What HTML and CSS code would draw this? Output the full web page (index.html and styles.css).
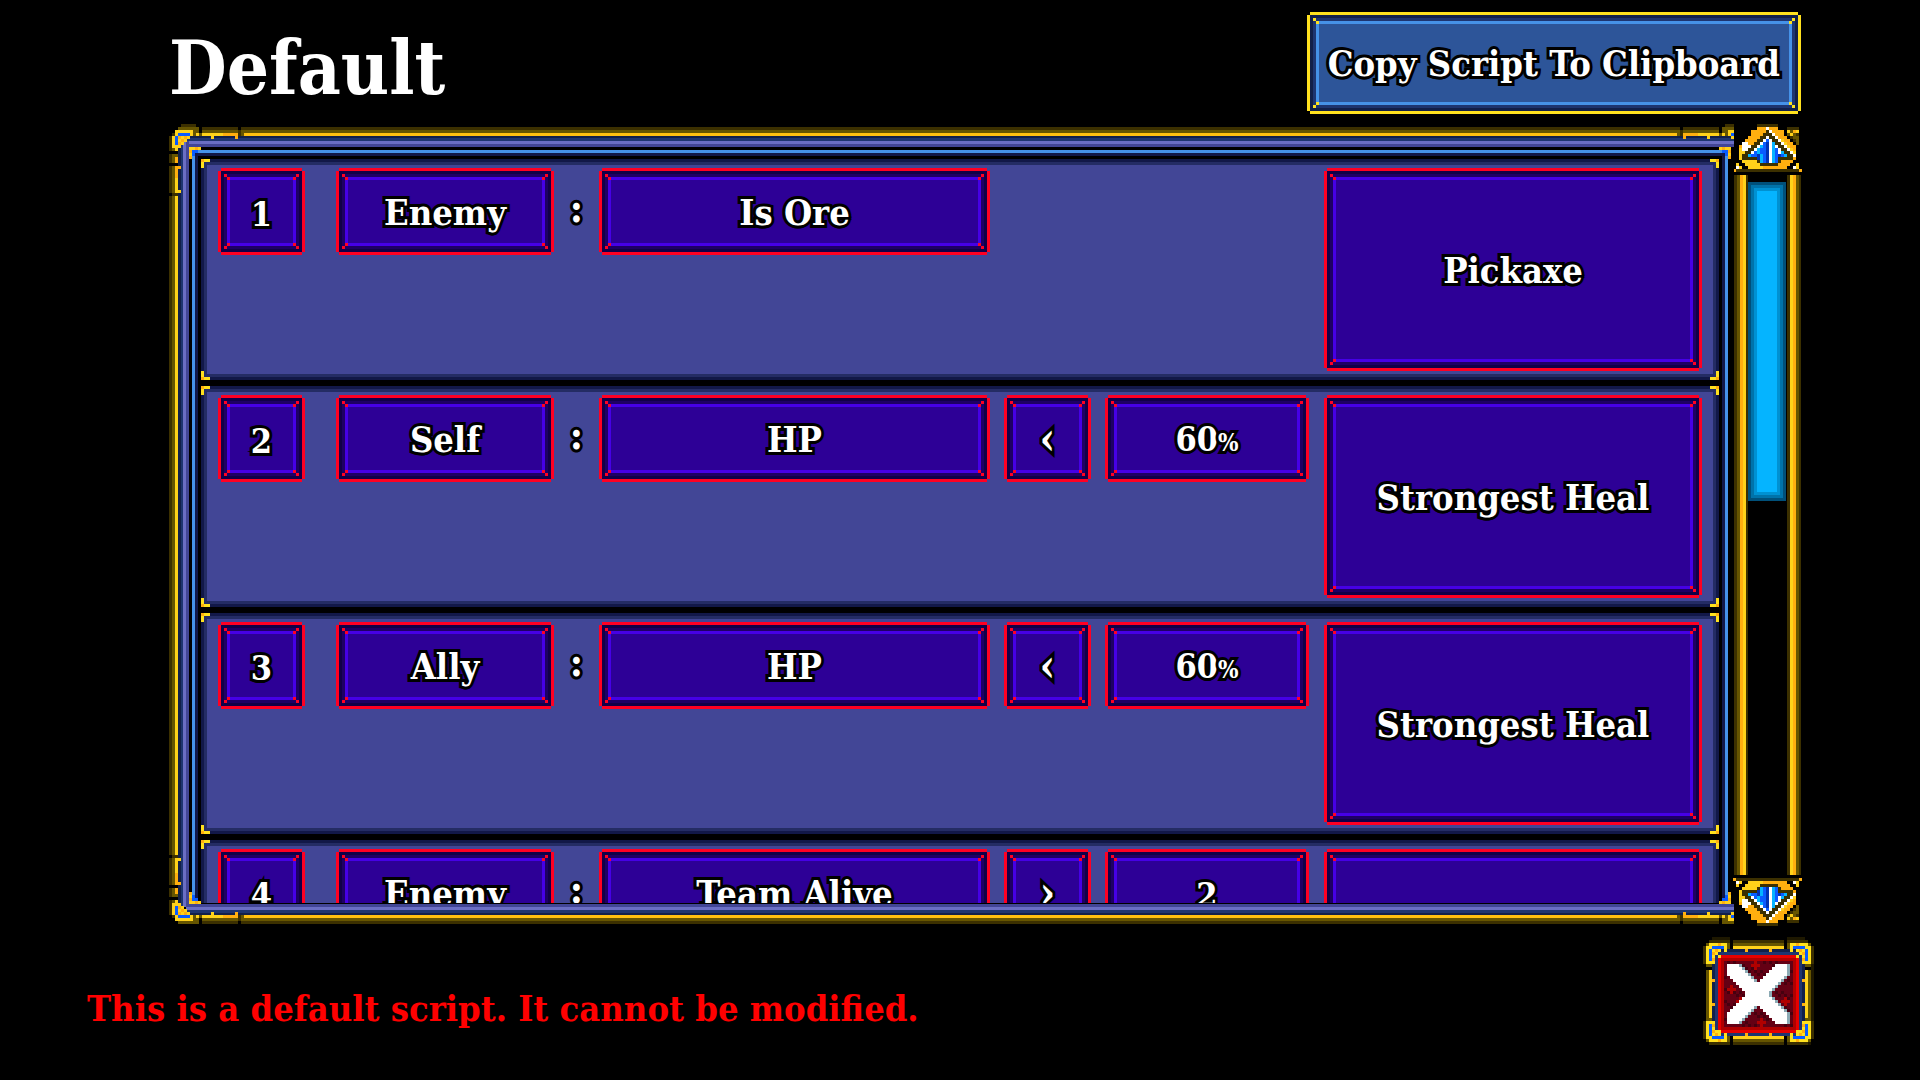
FILE: index.html
```html
<!DOCTYPE html>
<html lang="en">
<head>
<meta charset="utf-8">
<title>Default</title>
<link rel="stylesheet" href="styles.css">
</head>
<body>
<svg class="defs" aria-hidden="true">
  <symbol id="close-corner" viewBox="0 0 9 9">
    <path fill="#3c3000" d="M2 0h6v1h-6zM0 2h1v6h-1z"/>
    <path fill="#665500" d="M1 1h8v2h-8zM1 1h2v8h-2zM3 3h2v1h-2z"/>
    <path fill="#ffe11e" d="M2 1h6v1h-6zM1 2h7v1h-7zM7 2h1v2h-1zM1 2h1v6h-1zM1 7h3v1h-3zM3 3h3v1h-3zM3 3h1v4h-1zM4 4h1v1h-1z"/>
    <path fill="#ffaf0f" d="M4 3h1v1h-1zM3 4h1v1h-1zM5 1h1v1h-1zM3 6h1v1h-1z"/>
    <path fill="#0a5cff" d="M3 2h4v1h-4zM2 3h1v4h-1z"/>
  </symbol>
</svg>

<header class="top">
  <h1 class="title">Default</h1>
  <button class="box box-copy" type="button">Copy Script To Clipboard</button>
</header>

<main class="viewer">
  <section class="panel">
    <svg class="orn orn-tl" data-sprite="panelCorner"></svg>
    <svg class="orn orn-tr" data-sprite="panelCorner"></svg>
    <svg class="orn orn-bl" data-sprite="panelCorner"></svg>
    <svg class="orn orn-br" data-sprite="panelCorner"></svg>
    <div class="inner">
      <ol class="rules">
        <li class="rule">
          <button class="box num" type="button">1</button>
          <button class="box who" type="button">Enemy</button>
          <span class="colon">:</span>
          <button class="box cond" type="button">Is Ore</button>
          <button class="box act" type="button">Pickaxe</button>
        </li>
        <li class="rule">
          <button class="box num" type="button">2</button>
          <button class="box who" type="button">Self</button>
          <span class="colon">:</span>
          <button class="box cond" type="button">HP</button>
          <button class="box cmp" type="button">‹</button>
          <button class="box val" type="button">60<small class="pct">%</small></button>
          <button class="box act" type="button">Strongest Heal</button>
        </li>
        <li class="rule">
          <button class="box num" type="button">3</button>
          <button class="box who" type="button">Ally</button>
          <span class="colon">:</span>
          <button class="box cond" type="button">HP</button>
          <button class="box cmp" type="button">‹</button>
          <button class="box val" type="button">60<small class="pct">%</small></button>
          <button class="box act" type="button">Strongest Heal</button>
        </li>
        <li class="rule">
          <button class="box num" type="button">4</button>
          <button class="box who" type="button">Enemy</button>
          <span class="colon">:</span>
          <button class="box cond" type="button">Team Alive</button>
          <button class="box cmp" type="button">›</button>
          <button class="box val" type="button">2</button>
          <button class="box act" type="button"></button>
        </li>
      </ol>
    </div>
    <svg class="nook nook-tl" data-sprite="innerCorner"></svg>
    <svg class="nook nook-tr" data-sprite="innerCorner"></svg>
    <svg class="nook nook-bl" data-sprite="innerCorner"></svg>
    <svg class="nook nook-br" data-sprite="innerCorner"></svg>
  </section>
  <div class="scroll">
    <button class="cap" type="button"><svg data-sprite="arrow"></svg></button>
    <div class="track"><div class="thumb"></div></div>
    <button class="cap cap-down" type="button"><svg data-sprite="arrow"></svg></button>
  </div>
</main>

<footer class="bottom">
  <p class="note">This is a default script. It cannot be modified.</p>
  <button class="close" type="button">
    <svg viewBox="0 0 38 37" width="114" height="111" shape-rendering="crispEdges">
      <path fill="#1e1800" d="M3 0h6v1h19v-1h6v3h2v6h1v19h-1v8h-33v-1h-2v-33h2z"/>
      <path fill="#3c3000" d="M2 1h33v35h-33z"/>
      <path fill="#665500" d="M1 2h35v33h-35z"/>
      <path fill="#ffd21a" d="M9 3h19v1h-19zM9 33h19v1h-19zM2 9h1v19h-1zM34 9h1v19h-1z"/>
      <path fill="#000" d="M9 1h1v3h-1zM27 1h1v3h-1zM9 33h1v3h-1zM27 33h1v3h-1zM1 10h2v1h-2zM1 27h2v1h-2zM34 10h2v1h-2zM34 27h2v1h-2z"/>
      <path fill="#12204a" d="M3 4h31v29h-31z"/>
      <path fill="#1e3570" d="M4 5h29v28h-29z"/>
      <path fill="#ffaf0f" d="M14 4h1v1h-1zM22 4h1v1h-1zM14 32h1v1h-1zM22 32h1v1h-1zM3 14h1v1h-1zM3 22h1v1h-1zM33 14h1v1h-1zM33 22h1v1h-1z"/>
      <path fill="#e60000" d="M5 6h27v26h-27z"/>
      <path fill="#b00000" d="M6 7h25v24h-25z"/>
      <path fill="#640014" d="M7 8h23v22h-23z"/>
      <g id="close-art"></g>
      <use href="#close-corner" x="0" y="1" width="9" height="9"/>
      <use href="#close-corner" x="0" y="1" width="9" height="9" transform="translate(37 0) scale(-1 1)"/>
      <use href="#close-corner" x="0" y="1" width="9" height="9" transform="translate(0 37) scale(1 -1)"/>
      <use href="#close-corner" x="0" y="1" width="9" height="9" transform="translate(37 37) scale(-1 -1)"/>
      <path fill="#ffe11e" d="M5 6h1v1h-1zM31 6h1v1h-1zM5 31h1v1h-1zM31 31h1v1h-1z"/>
    </svg>
  </button>
</footer>
<script src="sprites.js"></script>
</body>
</html>
```
FILE: styles.css
```css
* { box-sizing: border-box; }

body {
  margin: 0;
  height: 100vh;
  display: flex;
  flex-direction: column;
  overflow: hidden;
  background: #000;
  color: #fff;
  font-family: "DejaVu Serif Condensed", "DejaVu Serif", serif;
  font-stretch: condensed;
  font-weight: bold;
  font-size: 36px;
  line-height: 40px;
}

svg { display: block; shape-rendering: crispEdges; }
.defs { position: absolute; width: 0; height: 0; }

button {
  margin: 0;
  padding: 0;
  border: 0;
  background: none;
  color: inherit;
  font: inherit;
}

/* header */
.top {
  display: flex;
  justify-content: space-between;
  align-items: center;
  padding: 12px 119px 10px 169px;
}
.title {
  margin: 0;
  padding-top: 10px;
  font-size: 74px;
  line-height: 88px;
}

/* pixel-bevelled box: the four offset shadows leave the corners notched */
.box {
  --edge: #ff0023;
  --ring1: #120048;
  --ring2: #1e0064;
  --line: #4600e6;
  --fill: #2d0096;
  position: relative;
  margin: 3px;
  background: var(--fill);
  box-shadow:
    inset 0 0 0 3px var(--ring1),
    inset 0 0 0 6px var(--ring2),
    inset 0 0 0 9px var(--line),
    0 -3px var(--edge), 0 3px var(--edge),
    -3px 0 var(--edge), 3px 0 var(--edge);
  -webkit-text-stroke: 6px #000;
  paint-order: stroke fill;
  text-shadow: 0 3px #000;
  white-space: nowrap;
}
.box::before {
  --dot: linear-gradient(var(--edge), var(--edge));
  content: "";
  position: absolute;
  inset: 3px;
  background:
    var(--dot) left 0 top 0, var(--dot) left 3px top 3px,
    var(--dot) right 0 top 0, var(--dot) right 3px top 3px,
    var(--dot) left 0 bottom 0, var(--dot) left 3px bottom 3px,
    var(--dot) right 0 bottom 0, var(--dot) right 3px bottom 3px;
  background-size: 3px 3px;
  background-repeat: no-repeat;
}
.box-copy {
  --edge: #ffe11e;
  --ring1: #12204a;
  --ring2: #1e3570;
  --line: #4692e8;
  --fill: #2d5599;
  height: 96px;
  padding: 0 18px;
}

/* framed list */
.viewer {
  flex: 1;
  min-height: 0;
  display: flex;
  padding: 0 118px 0 169px;
}
.panel {
  position: relative;
  flex: 1;
  min-width: 0;
  overflow: hidden;
  padding: 23px 5px 21px 20px;
  background:
    linear-gradient(#000, #000) 20px 23px / 100% calc(100% - 44px) no-repeat,
    linear-gradient(90deg, #3c3000 3px, #665500 3px 6px, #ffd21a 6px 9px, #12204a 9px 12px, #1e3570 12px 14px, #6a6ec4 14px 17px, #424696 17px 20px, transparent 20px) 0 17px / 20px calc(100% - 34px) no-repeat,
    linear-gradient(#000 3px, #3c3000 3px 6px, #665500 6px 9px, #ffc010 9px 12px, #12204a 12px 14px, #1e3570 14px 17px, #6a6ec4 17px 20px, #424696 20px 23px) 17px 0 / 100% 23px no-repeat,
    linear-gradient(0deg, #3c3000 3px, #665500 3px 6px, #ffc010 6px 9px, #12204a 9px 11px, #1e3570 11px 14px, #6a6ec4 14px 17px, #424696 17px 20px, #000 20px) 17px 100% / 100% 21px no-repeat;
}
.inner {
  height: 100%;
  margin: 0 1px 0 3px;
  padding: 12px 9px 0;
  overflow: hidden;
  background:
    linear-gradient(#4692e8 3px, #121848 3px 6px, #000 6px) 3px 3px / calc(100% - 6px) 6px no-repeat,
    linear-gradient(90deg, #4692e8 3px, #121848 3px) 0 3px / 6px 100% no-repeat,
    linear-gradient(270deg, #4692e8 3px, #121848 3px) 100% 3px / 6px 100% no-repeat;
}
.rules {
  display: flex;
  flex-direction: column;
  gap: 6px;
  margin: 0;
  padding: 0;
  list-style: none;
}
.rule {
  --y: linear-gradient(#ffe11e, #ffe11e);
  --a: linear-gradient(#ffaf0f, #ffaf0f);
  display: grid;
  grid-template-columns: 87px 31px 218fr 45px 391fr 14px 87px 14px 204fr 15px 378fr;
  grid-template-rows: 87px 116px;
  padding: 9px 17px;
  background:
    var(--a) left top / 3px 3px, var(--a) right top / 3px 3px,
    var(--a) left bottom / 3px 3px, var(--a) right bottom / 3px 3px,
    var(--y) left top / 9px 3px, var(--y) right top / 9px 3px,
    var(--y) left bottom / 9px 3px, var(--y) right bottom / 9px 3px,
    var(--y) left top / 3px 9px, var(--y) right top / 3px 9px,
    var(--y) left bottom / 3px 9px, var(--y) right bottom / 3px 9px,
    linear-gradient(#424696, #424696) center / calc(100% - 12px) calc(100% - 12px),
    linear-gradient(#242c64, #242c64) center / calc(100% - 6px) calc(100% - 6px),
    #121848;
  background-repeat: no-repeat;
}
.rule > * { grid-row: 1; }
.num { grid-column: 1; }
.who { grid-column: 3; }
.colon {
  grid-column: 4;
  align-self: center;
  padding-bottom: 8px;
  text-align: center;
  font-size: 40px;
  -webkit-text-stroke: 6px #000;
  paint-order: stroke fill;
}
.cond { grid-column: 5; }
.cmp { grid-column: 7; }
.val { grid-column: 9; }
.num, .val { padding-top: 4px; font-size: 34px; }
.cmp { font-size: 44px; }
.rule > .act { grid-column: 11; grid-row: 1 / 3; }
.pct { font-size: 24px; }

/* gold corner pieces */
.orn, .nook { position: absolute; }
.orn-tl { left: 0; top: 0; }
.orn-tr { right: -18px; top: 0; transform: scaleX(-1); }
.orn-bl { left: 0; bottom: -3px; transform: scaleY(-1); }
.orn-br { right: -18px; bottom: -3px; transform: scale(-1); }
.nook-tl { left: 20px; top: 23px; }
.nook-tr { right: 3px; top: 23px; transform: scaleX(-1); }
.nook-bl { left: 20px; bottom: 20px; transform: scaleY(-1); }
.nook-br { right: 3px; bottom: 20px; transform: scale(-1); }

/* scrollbar */
.scroll {
  display: flex;
  flex-direction: column;
  width: 69px;
  margin: 0 0 -2px -1px;
}
.cap-down { transform: scaleY(-1); }
.track {
  flex: 1;
  margin: 0 1px;
  padding: 7px 15px 0 14px;
  background:
    linear-gradient(90deg, #3c3000 3px, #665500 3px 6px, #ffaf0f 6px 9px, #ffd21a 9px 12px, #3c3000 12px 14px, #000 14px) left / 50% 100% no-repeat,
    linear-gradient(270deg, #3c3000 3px, #665500 3px 6px, #ffaf0f 6px 9px, #ffd21a 9px 12px, #3c3000 12px 15px, #000 15px) right / 50% 100% no-repeat;
}
.thumb {
  height: 46%;
  background: #05b4ff;
  box-shadow:
    inset 0 0 0 3px #00507a,
    inset 0 0 0 6px #0073aa,
    inset 0 0 0 9px #0091d2;
}

/* footer */
.bottom {
  display: flex;
  justify-content: space-between;
  align-items: flex-start;
  padding: 13px 103px 32px 87px;
}
.note {
  margin: 51px 0 0;
  color: #f00;
}
```
FILE: sprites.js
```javascript
// Pixel sprites: one character per 3px cell, painted as horizontal runs.
const CELL = 3;
const COLORS = {
  k: "#000000", d: "#3c3000", o: "#665500", a: "#ffaf0f", y: "#ffd21a",
  w: "#ffffff", n: "#0032b4", b: "#0a5cff", c: "#05b4ff"
};
const SPRITES = {
  arrow: [
    "........ddddddd........",
    "......kkaaawaaakk.dddd.",
    ".....kaaaaadwaaaakyoay.",
    ".....kaaaadddwaaakoyod.",
    "....kaaaaddwddwaaakdoo.",
    "..kkaaaaddwbwddwyaakdo.",
    "..kwwaaddwbnwcddwyaako.",
    ".kawwwddwcbnwcwddwyaak.",
    ".kywwddwcbbnwcbwddwyak.",
    ".kyyddwbcbbnwcbwcddwyk.",
    ".kyddcbbncbnwcbnbcddwk.",
    ".kydddddncbnwcbdddddak.",
    ".kkyyyyydcbnwcbdaaaakk.",
    ".ykkyyyyyddddddaaaakky.",
    ".wykkyyyyyaaaaaaaakkwy.",
    "addddddddddddddddddddda",
    "kkkkkkkkkkkkkkkkkkkkkkk"
  ],
  panelCorner: [
    "kkkkdddddkkkkkkkkkkkkkkkk",
    "kkkoooooookddddddddddddkd",
    "kkyyyyyyookoooooooooooodo",
    "kdybbbbyoyoyyyyyyyaaaaado",
    "dybayay.......y.......a",
    "dybyay",
    "dybay",
    "dyyy",
    "doy",
    "kkk",
    "doo",
    "doa",
    "doa",
    "kkk",
    "doaa",
    "doa",
    "doa",
    "doa",
    "doy",
    "doy",
    "doy",
    "doy",
    "doyy",
    "kdd",
    "doy"
  ],
  innerCorner: [
    "yyay",
    "abb",
    "yb",
    "a"
  ]
};

function runs(rows) {
  let out = "";
  rows.forEach((row, y) => {
    for (let x = 0; x < row.length;) {
      let end = x + 1;
      while (row[end] === row[x]) end++;
      if (COLORS[row[x]]) {
        out += `<rect x="${x}" y="${y}" width="${end - x}" height="1" fill="${COLORS[row[x]]}"/>`;
      }
      x = end;
    }
  });
  return out;
}

document.querySelectorAll("[data-sprite]").forEach((svg) => {
  const rows = SPRITES[svg.dataset.sprite];
  const w = Math.max(...rows.map((r) => r.length));
  svg.setAttribute("viewBox", `0 0 ${w} ${rows.length}`);
  svg.setAttribute("width", w * CELL);
  svg.setAttribute("height", rows.length * CELL);
  svg.innerHTML = runs(rows);
});

// Close button: speckled red cloth, crosses, and the stepped white X.
const rect = (x, y, w, h, fill) =>
  `<rect x="${x}" y="${y}" width="${w}" height="${h}" fill="${fill}"/>`;
let art = "";
for (let y = 8; y < 30; y++) {
  for (let x = 7; x < 30; x++) {
    if ((x + y) % 2 === 0 && (x * 3 + y * 5) % 7 < 3) art += rect(x, y, 1, 1, "#46000f");
  }
}
[[17, 9], [9, 17], [27, 21], [19, 28], [12, 21], [22, 13]].forEach(([x, y]) => {
  art += rect(x - 1, y, 3, 1, "#b00000") + rect(x, y - 1, 1, 3, "#b00000");
});
for (let i = 0; i < 20; i++) {
  const k = Math.min(i, 19 - i);
  const from = Math.max(0, k - 3);
  const len = k + 4 - from;
  art += rect(8 + from, 9 + i, len + 1, 1, "#8caab4") + rect(29 - from - len, 9 + i, len, 1, "#8caab4");
  art += rect(8 + from, 9 + i, len, 1, "#fff") + rect(28 - from - len, 9 + i, len, 1, "#fff");
}
document.getElementById("close-art").innerHTML = art;
```
